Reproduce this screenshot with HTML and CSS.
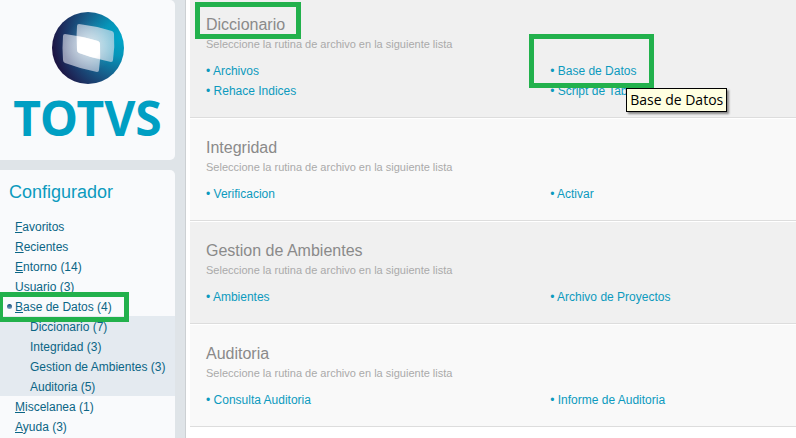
FILE: index.html
```html
<!DOCTYPE html>
<html lang="es">
<head>
    <meta charset="UTF-8">
    <meta name="viewport" content="width=device-width, initial-scale=1.0">
    <title>TOTVS Configurador</title>
    <link rel="stylesheet" href="styles.css">
</head>
<body>
    <!-- Sidebar -->
    <aside class="sidebar">
        <div class="card logo">
            <svg class="logo-mark" viewBox="0 0 72 72" aria-hidden="true">
                <defs>
                    <radialGradient id="ball" cx="0.96" cy="0.36" r="1">
                        <stop offset="0" stop-color="#00a5c8"/>
                        <stop offset="0.25" stop-color="#0595b9"/>
                        <stop offset="0.55" stop-color="#175f8c"/>
                        <stop offset="0.8" stop-color="#1c3263"/>
                        <stop offset="1" stop-color="#1d0e3c"/>
                    </radialGradient>
                    <radialGradient id="halo" gradientUnits="userSpaceOnUse" cx="37" cy="34" r="26">
                        <stop offset="0" stop-color="#fff" stop-opacity="0.9"/>
                        <stop offset="1" stop-color="#fff" stop-opacity="0"/>
                    </radialGradient>
                    <radialGradient id="glow" gradientUnits="userSpaceOnUse" cx="37" cy="35" r="19">
                        <stop offset="0.6" stop-color="#fff"/>
                        <stop offset="1" stop-color="#fff" stop-opacity="0.3"/>
                    </radialGradient>
                </defs>
                <circle cx="36" cy="36" r="36" fill="url(#ball)"/>
                <circle cx="37" cy="34" r="26" fill="url(#halo)" opacity="0.2"/>
                <g fill="#e2e2ee" fill-opacity="0.62">
                    <path d="M27 12Q44 14 60 19Q62 20 62 22Q63 35 61 48Q61 50 59 50Q43 47 27 41Q25 40 25 38Q24 26 25 14Q25 12 27 12Z"/>
                    <path d="M13 22Q30 24 46 29Q48 30 48 32Q49 45 47 58Q47 60 45 60Q29 57 13 51Q11 50 11 48Q10 36 11 24Q11 22 13 22Z"/>
                </g>
                <g fill="url(#halo)" opacity="0.7">
                    <path d="M27 12Q44 14 60 19Q62 20 62 22Q63 35 61 48Q61 50 59 50Q43 47 27 41Q25 40 25 38Q24 26 25 14Q25 12 27 12Z"/>
                    <path d="M13 22Q30 24 46 29Q48 30 48 32Q49 45 47 58Q47 60 45 60Q29 57 13 51Q11 50 11 48Q10 36 11 24Q11 22 13 22Z"/>
                </g>
                <path d="M25 24Q36 26 46 29Q48 30 48 32L48 47Q37 45 27 41Q25 40 25 38Z" fill="url(#glow)"/>
            </svg>
            <div class="logo-text">TOTVS</div>
        </div>

        <nav class="card menu">
            <h1>Configurador</h1>
            <ul>
                <li><a href="#"><u>F</u>avoritos</a></li>
                <li><a href="#"><u>R</u>ecientes</a></li>
                <li><a href="#"><u>E</u>ntorno (14)</a></li>
                <li><a href="#"><u>U</u>suario (3)</a></li>
                <li class="active"><a href="#"><u>B</u>ase de Datos (4)</a>
                    <ul class="submenu">
                        <li><a href="#">Diccionario (7)</a></li>
                        <li><a href="#">Integridad (3)</a></li>
                        <li><a href="#">Gestion de Ambientes (3)</a></li>
                        <li><a href="#">Auditoria (5)</a></li>
                    </ul>
                </li>
                <li><a href="#"><u>M</u>iscelanea (1)</a></li>
                <li><a href="#"><u>A</u>yuda (3)</a></li>
            </ul>
        </nav>
    </aside>

    <!-- Routines -->
    <main class="content">
        <section class="group">
            <h2><span class="mark mark-title">Diccionario</span></h2>
            <p>Seleccione la rutina de archivo en la siguiente lista</p>
            <ul class="links">
                <li><a href="#">Archivos</a></li>
                <li><span class="mark mark-link"><a href="#">Base de Datos</a><span class="tooltip" role="tooltip">Base de Datos</span></span></li>
                <li><a href="#">Rehace Indices</a></li>
                <li><a href="#">Script de Tablas</a></li>
            </ul>
        </section>

        <section class="group">
            <h2>Integridad</h2>
            <p>Seleccione la rutina de archivo en la siguiente lista</p>
            <ul class="links">
                <li><a href="#">Verificacion</a></li>
                <li><a href="#">Activar</a></li>
            </ul>
        </section>

        <section class="group">
            <h2>Gestion de Ambientes</h2>
            <p>Seleccione la rutina de archivo en la siguiente lista</p>
            <ul class="links">
                <li><a href="#">Ambientes</a></li>
                <li><a href="#">Archivo de Proyectos</a></li>
            </ul>
        </section>

        <section class="group">
            <h2>Auditoria</h2>
            <p>Seleccione la rutina de archivo en la siguiente lista</p>
            <ul class="links">
                <li><a href="#">Consulta Auditoria</a></li>
                <li><a href="#">Informe de Auditoria</a></li>
            </ul>
        </section>
    </main>
</body>
</html>
```
FILE: styles.css
```css
*, *::before, *::after {
    box-sizing: border-box;
}
body {
    display: flex;
    min-height: 100vh;
    margin: 0;
    background: #fff;
    font-family: "Liberation Sans", Arial, sans-serif;
    font-size: 12px;
    line-height: 20px;
}
h1, h2, p, ul {
    margin: 0;
    padding: 0;
    font-weight: normal;
}
ul {
    list-style: none;
}
a {
    color: #0c9abe;
    text-decoration: none;
}

/* Sidebar */
.sidebar {
    display: flex;
    flex-direction: column;
    flex: none;
    gap: 10px;
    width: 186px;
    padding-right: 10px;
    background: #dfe4e8;
    border-right: 1px solid #ccd0d3;
}
.card {
    background: #f9fafc;
    border-radius: 0 5px 5px 0;
}
.logo {
    display: flex;
    flex-direction: column;
    align-items: center;
    padding: 12px 0 16px;
}
.logo-mark {
    width: 72px;
    height: 72px;
}
.logo-text {
    height: 60px;
    color: #009fc3;
    font-family: "Noto Sans", sans-serif;
    font-size: 48px;
    font-weight: bold;
    line-height: 68px;
}
.menu {
    flex: 1;
    border-bottom-right-radius: 0;
}
.menu h1 {
    padding: 8px 9px 10px;
    color: #0c9abe;
    font-size: 18px;
    line-height: 28px;
}
.menu a {
    display: block;
    padding: 2px 0 0 15px;
    color: #0b6585;
    line-height: 18px;
}
.menu .submenu {
    background: #e4eaf0;
}
.menu .submenu a {
    padding-left: 30px;
}
.active {
    position: relative;
}
.active::before {
    content: "";
    position: absolute;
    top: 8px;
    left: 7px;
    width: 5px;
    height: 5px;
    border-radius: 50%;
    background: linear-gradient(#0b4a78, #7f9fbe);
}

/* Highlight frames */
.active::after,
.mark::after {
    content: "";
    position: absolute;
    border: 5px solid #22b14c;
    pointer-events: none;
}
.active::after {
    top: -4px;
    left: -2px;
    width: 131px;
    height: 30px;
}
.mark {
    display: inline-block;
    position: relative;
}
.mark-title::after {
    inset: -13px -16px -4px -11px;
}
.mark-link::after {
    inset: -27px -18px -7px -21px;
}

/* Routines */
.content {
    flex: 1;
    min-width: 0;
    margin-left: 4px;
}
.group {
    padding: 19px 0 16px 16px;
    background: #f9f9f9;
    border-top: 1px solid #fff;
    border-bottom: 1px solid #ddd;
}
.group:nth-child(odd) {
    background: #f0f0f0;
}
.group:first-child {
    padding-top: 15px;
    border-top: 0;
}
.group h2 {
    color: #8a8a8a;
    font-size: 16px;
    line-height: 20px;
}
.group p {
    padding-bottom: 8px;
    color: #aaa;
    font-size: 11px;
    line-height: 18px;
}
.links {
    display: grid;
    grid-template-columns: 7fr 5fr;
}
.links a::before {
    content: "• ";
}
.tooltip {
    position: absolute;
    top: 27px;
    left: 76px;
    z-index: 1;
    padding: 1px 3px;
    border: 1px solid #000;
    background: #ffffe1;
    box-shadow: 2px 2px 2px #888;
    color: #000;
    font-family: "Open Sans", sans-serif;
    font-size: 14px;
    white-space: nowrap;
}
```
